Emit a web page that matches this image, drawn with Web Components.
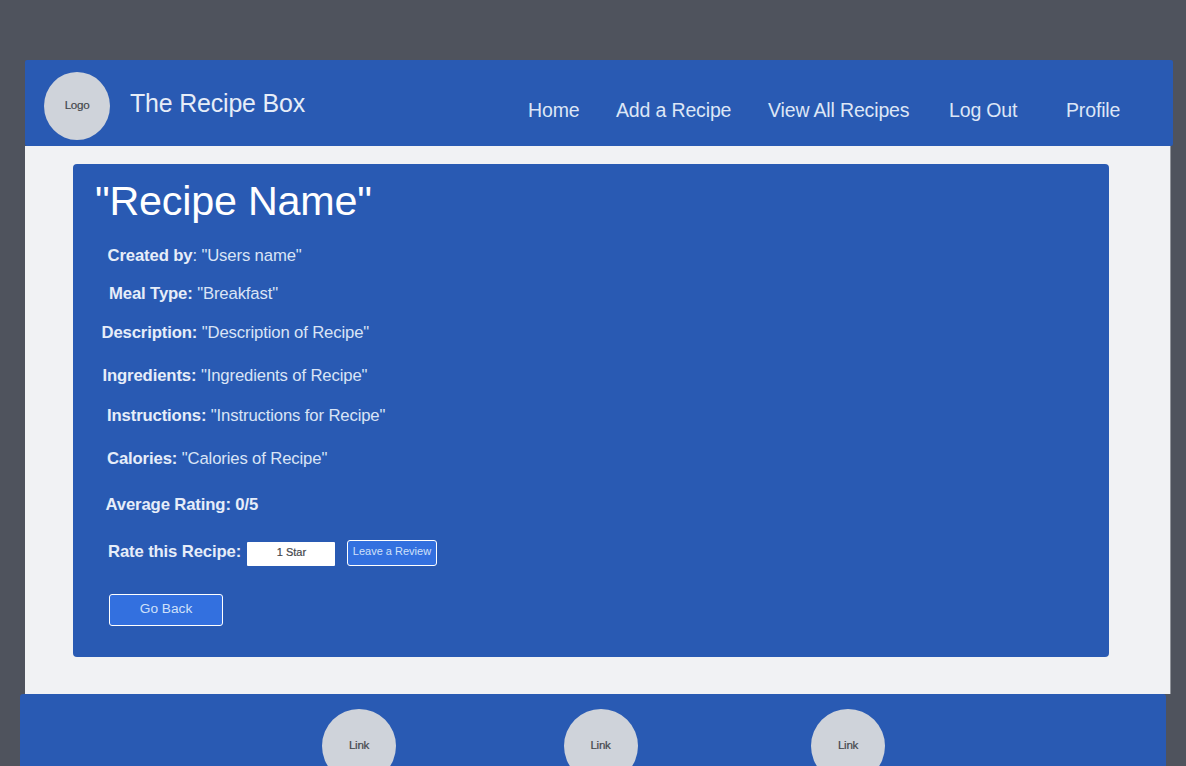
<!DOCTYPE html>
<html lang="en">
<head>
<meta charset="utf-8">
<title>The Recipe Box</title>
<style>
html,body{margin:0;height:766px;overflow:hidden;background:#4f535d}
body{font-family:"Liberation Sans",Arial,sans-serif;color:#e3eaf7}
</style>
</head>
<body>
<recipe-app></recipe-app>
<script>
const define = (name, html) => customElements.define(name, class extends HTMLElement {
  constructor() {
    super();
    const t = document.createElement('template');
    t.innerHTML = html;
    this.attachShadow({mode: 'open'}).append(t.content.cloneNode(true));
  }
});

define('round-badge', `<style>
:host{display:flex;align-items:center;justify-content:center;flex:none;box-sizing:border-box;border-radius:50%;background:#cfd3da;color:#44474c;font-size:11.6px;letter-spacing:-.3px;line-height:14px;-webkit-text-stroke:.2px #44474c}
</style><slot></slot>`);

define('nav-link', `<style>
:host{display:block;flex:none;white-space:nowrap;font-size:19.5px;letter-spacing:-.15px;line-height:24px;color:#dde6f6}
</style><slot></slot>`);

define('site-header', `<style>
:host{display:flex;box-sizing:border-box;width:1148px;height:86px;margin-left:25px;padding-left:19px;background:#295ab3;border-radius:2px}
round-badge{width:66px;height:68px;margin-top:12px;padding-bottom:2px}
.brand{width:398px;margin:29px 0 0 20px;font-size:24.9px;letter-spacing:-.15px;line-height:28px;color:#e6edf8;white-space:nowrap}
nav{display:flex;margin-top:38px}
nav-link:nth-child(1){width:88px}nav-link:nth-child(2){width:152px}nav-link:nth-child(3){width:181px}nav-link:nth-child(4){width:117px}
</style>
<round-badge>Logo</round-badge><div class="brand">The Recipe Box</div>
<nav><nav-link>Home</nav-link><nav-link>Add a Recipe</nav-link><nav-link>View All Recipes</nav-link><nav-link>Log Out</nav-link><nav-link>Profile</nav-link></nav>`);

define('recipe-field', `<style>
:host{display:block;height:20px;font-size:16.7px;letter-spacing:-.135px;line-height:22px;white-space:nowrap;color:#d9e4f6}
::slotted(b){color:#e6edf9}
</style><slot></slot>`);

define('action-button', `<style>
:host{display:block;flex:none}
button{display:block;box-sizing:border-box;width:100%;height:100%;margin:0;padding:0 0 4px;border:1px solid #fff;border-radius:3px;background:#3370df;color:#d0e0fa;font:inherit;white-space:nowrap}
</style><button><slot></slot></button>`);

define('rating-select', `<style>
:host{display:flex;flex:none;box-sizing:border-box;align-items:center;justify-content:center;width:88px;height:24px;padding-bottom:3px;background:#fff;border-radius:1px;color:#44474c;font-size:11px;-webkit-text-stroke:.2px #44474c}
</style><slot></slot>`);

define('recipe-card', `<style>
:host{display:block;box-sizing:border-box;width:1036px;height:493px;margin:18px 0 0 48px;padding:14px 0 0 22px;background:#295ab3;border-radius:4px}
h1{margin:0;font-weight:400;font-size:41.3px;letter-spacing:-.22px;line-height:46px;color:#fff;white-space:nowrap}
.created{margin:21px 0 0 12.5px}
.meal{margin:18px 0 0 14px}
.desc{margin:19px 0 0 6.5px}
.ingr{margin:23px 0 0 7.5px}
.inst{margin:20px 0 0 12px}
.cal{margin:23px 0 0 12px}
.avg{margin:26px 0 0 10.5px}
.rate{display:flex;margin:25px 0 0 13px;height:28px}
.rate recipe-field{width:139.4px;margin-top:2px}
rating-select{margin-top:3px;padding-bottom:4px}
.review{width:90px;height:26px;margin:1px 0 0 11.6px;font-size:11px}
.back{width:114px;height:32px;margin:27px 0 0 14px;font-size:13.7px}
</style>
<h1>"Recipe Name"</h1>
<recipe-field class="created"><b>Created by</b>: "Users name"</recipe-field>
<recipe-field class="meal"><b>Meal Type:</b> "Breakfast"</recipe-field>
<recipe-field class="desc"><b>Description:</b> "Description of Recipe"</recipe-field>
<recipe-field class="ingr"><b>Ingredients:</b> "Ingredients of Recipe"</recipe-field>
<recipe-field class="inst"><b>Instructions:</b> "Instructions for Recipe"</recipe-field>
<recipe-field class="cal"><b>Calories:</b> "Calories of Recipe"</recipe-field>
<recipe-field class="avg"><b>Average Rating: 0/5</b></recipe-field>
<div class="rate"><recipe-field><b>Rate this Recipe:</b></recipe-field><rating-select>1 Star</rating-select><action-button class="review">Leave a Review</action-button></div>
<action-button class="back">Go Back</action-button>`);

define('site-footer', `<style>
:host{display:flex;box-sizing:border-box;width:1146px;height:100px;margin-left:20px;padding:14.5px 0 0 302px;background:#295ab3;border-radius:3px 3px 0 0}
round-badge{width:74px;height:74px;padding-bottom:2px}
round-badge:nth-of-type(2){margin:0 173.5px 0 167.5px}
</style><round-badge>Link</round-badge><round-badge>Link</round-badge><round-badge>Link</round-badge>`);

define('recipe-app', `<style>
:host{display:block;box-sizing:border-box;height:766px;padding-top:60px;overflow:hidden}
main{display:flow-root;height:548px;width:1145px;margin-left:25px;background:#f1f2f4;border-right:1px solid #8f9299;box-sizing:content-box}
</style><site-header></site-header><main><recipe-card></recipe-card></main><site-footer></site-footer>`);
</script>
</body>
</html>
